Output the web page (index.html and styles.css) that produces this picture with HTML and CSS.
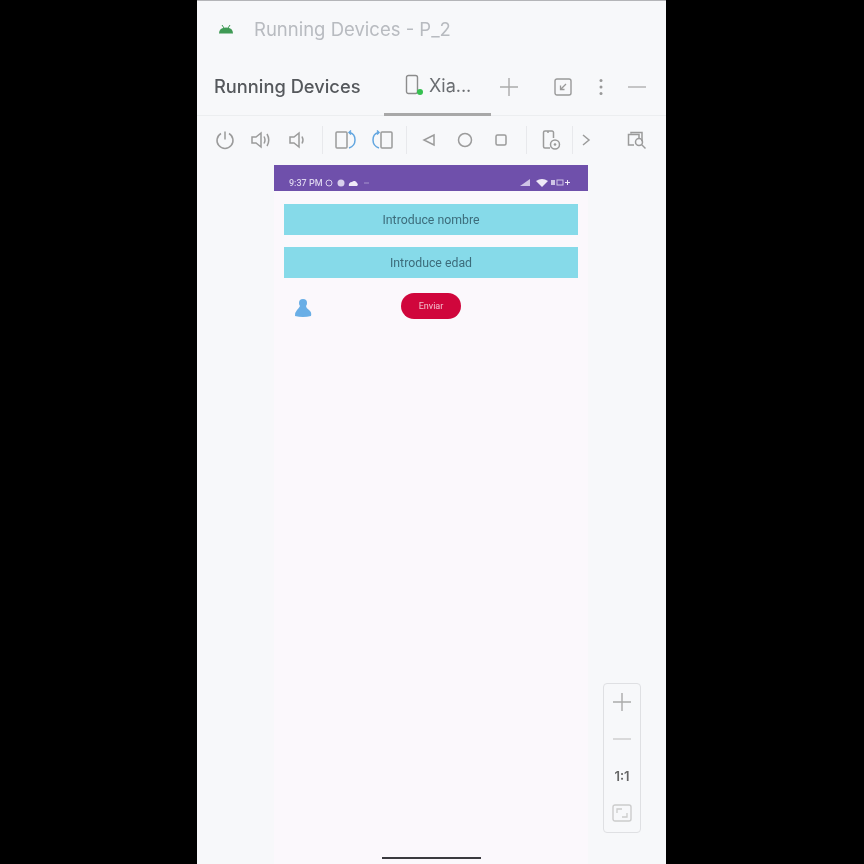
FILE: index.html
```html
<!DOCTYPE html>
<html lang="en">
  <head>
    <meta charset="UTF-8" />
    <meta name="viewport" content="width=device-width, initial-scale=1.0" />
    <title>Running Devices</title>
    <link rel="stylesheet" href="styles.css">
  </head>
  <body>
    <div class="window">
      <div class="title-bar">
        <svg class="android" width="16" height="10" viewBox="0 0 16 10">
          <path d="M1 9.500q0-6 7-6t7 6z" fill="#3f9a55" />
          <path d="M4 1l2 3M12 1l-2 3" stroke="#3f9a55" stroke-width="1" />
        </svg>
        <span class="title-text">Running Devices - P_2</span>
      </div>

      <div class="tool-bar">
        <span class="tool-name">Running Devices</span>
        <div class="tab">
          <svg class="tab-icon" width="20" height="22" viewBox="0 0 20 22">
            <rect x="1.500" y="1.500" width="11" height="18" rx="2" fill="none" stroke="#8c8c8c" stroke-width="1.400" />
            <circle cx="15" cy="18" r="3" fill="#35c04f" />
          </svg>
          <span class="tab-name">Xia...</span>
        </div>
        <div class="tool-actions">
          <svg class="cell-plus" width="20" height="20" viewBox="0 0 20 20">
            <path d="M10 1v18M1 10h18" stroke="#aaa" stroke-width="1.400" />
          </svg>
          <svg class="cell-collapse" width="18" height="18" viewBox="0 0 18 18">
            <rect x="1" y="1" width="16" height="16" rx="2" fill="none" stroke="#999" stroke-width="1.400" />
            <path d="M12 6l-5.500 5.500M6.500 7.500v4h4" fill="none" stroke="#999" stroke-width="1.300" />
          </svg>
          <svg class="cell-dots" width="4" height="18" viewBox="0 0 4 18">
            <circle cx="2" cy="2.500" r="1.500" fill="#999" />
            <circle cx="2" cy="9" r="1.500" fill="#999" />
            <circle cx="2" cy="15.500" r="1.500" fill="#999" />
          </svg>
          <svg class="cell-minus" width="18" height="4" viewBox="0 0 18 4">
            <path d="M0 2h18" stroke="#b5b5b5" stroke-width="1.500" />
          </svg>
        </div>
      </div>

      <div class="device-bar">
        <div class="cell">
          <svg width="20" height="20" viewBox="0 0 20 20"><path d="M6 3.500a8 8 0 1 0 8 0M10 1.500v8" class="line" /></svg>
        </div>
        <div class="cell">
          <svg width="22" height="20" viewBox="0 0 22 20"><path d="M2 7h4l5-4v14l-5-4H2zM14 6.500q2 3.500 0 7M17 4q3.500 6 0 12" class="line" /></svg>
        </div>
        <div class="cell">
          <svg width="18" height="20" viewBox="0 0 18 20"><path d="M2 7h4l5-4v14l-5-4H2zM14 6.500q2 3.500 0 7" class="line" /></svg>
        </div>
        <div class="sep sep-first"></div>
        <div class="cell">
          <svg width="22" height="20" viewBox="0 0 22 20"><rect x="1" y="2" width="11" height="16" rx="1" class="line" /><path d="M15 2.500q5 1.500 5 7.500t-6 8" class="line blue" /><path d="M16 0.500l-2 2 2 2" class="line blue" /></svg>
        </div>
        <div class="cell">
          <svg width="22" height="20" viewBox="0 0 22 20"><rect x="10" y="2" width="11" height="16" rx="1" class="line" /><path d="M7 2.500q-5 1.500-5 7.500t6 8" class="line blue" /><path d="M6 0.500l2 2-2 2" class="line blue" /></svg>
        </div>
        <div class="sep sep-nav"></div>
        <div class="cell">
          <svg width="14" height="14" viewBox="0 0 14 14"><path d="M12 2v10L2 7z" class="line" /></svg>
        </div>
        <div class="cell">
          <svg width="16" height="16" viewBox="0 0 16 16"><circle cx="8" cy="8" r="6.500" class="line" /></svg>
        </div>
        <div class="cell">
          <svg width="14" height="14" viewBox="0 0 14 14"><rect x="2" y="2" width="10" height="10" rx="1.500" class="line" /></svg>
        </div>
        <div class="sep sep-device"></div>
        <div class="cell">
          <svg width="20" height="22" viewBox="0 0 20 22"><path d="M9 19H4a1.500 1.500 0 0 1-1.500-1.500v-14A1.500 1.500 0 0 1 4 2h7a1.500 1.500 0 0 1 1.500 1.500V9M7 2v2" class="line" /><circle cx="14" cy="15.500" r="4.500" class="line" /><circle cx="14" cy="15.500" r="1.300" fill="#999" /></svg>
        </div>
        <div class="sep sep-tight"></div>
        <div class="cell cell-small">
          <svg width="10" height="14" viewBox="0 0 10 14"><path d="M2 2l6 5-6 5" class="line" /></svg>
        </div>
        <div class="cell cell-last">
          <svg width="22" height="20" viewBox="0 0 22 20"><path d="M6 3.500V2.500h11v8h-1M9 15H3.500V4.500H14V8" class="line" /><circle cx="14" cy="12" r="3.500" class="line" /><path d="M16.500 14.500l4 4" class="line" /></svg>
        </div>
      </div>

      <div class="phone">
        <div class="status-bar">
          <span class="clock">9:37 PM</span>
          <svg class="status-left" width="48" height="8" viewBox="0 0 48 8">
            <circle cx="6" cy="4" r="3" fill="none" stroke="#d8cfec" />
            <circle cx="18" cy="4" r="3.500" fill="#d8cfec" />
            <path d="M26 7a3 3 0 0 1 3-4 3 3 0 0 1 5 1 2 2 0 0 1 0 3z" fill="#efeaf7" />
            <path d="M41 4h5" stroke="#a794cd" />
          </svg>
          <svg class="status-right" width="52" height="9" viewBox="0 0 52 9">
            <path d="M2 8l10-7v7z" fill="#cfc4e6" />
            <path d="M18 3q6-4 12 0l-6 6z" fill="#efeaf7" />
            <rect x="33" y="2" width="4" height="5" fill="#cfc4e6" />
            <rect x="39" y="2" width="6" height="5" fill="none" stroke="#cfc4e6" />
            <path d="M47 4.500h5M49.500 2v5" stroke="#efeaf7" />
          </svg>
        </div>

        <div class="form">
          <div class="field">Introduce nombre</div>
          <div class="field field-age">Introduce edad</div>
          <div class="form-row">
            <svg class="person" width="18" height="20" viewBox="0 0 18 20">
              <circle cx="9" cy="5" r="4" fill="#69aee6" />
              <path d="M6 8h6q0 2 3 4t2 6q-8 2-16 0 0-4 2-6t3-4z" fill="#69aee6" />
            </svg>
            <div class="send">Enviar</div>
          </div>
        </div>

        <div class="home-bar"></div>
      </div>

      <div class="zoom-panel">
        <svg width="20" height="20" viewBox="0 0 20 20"><path d="M10 1v18M1 10h18" stroke="#aaa" stroke-width="1.400" /></svg>
        <svg class="zoom-minus" width="18" height="2" viewBox="0 0 18 2"><path d="M0 1h18" stroke="#ccc" stroke-width="1.400" /></svg>
        <span class="zoom-label">1:1</span>
        <svg class="zoom-fit" width="20" height="18" viewBox="0 0 20 18">
          <rect x="1" y="1" width="18" height="16" rx="2" fill="none" stroke="#ccc" stroke-width="1.400" />
          <path d="M5 9V5h5M15 9v4h-5" fill="none" stroke="#ccc" stroke-width="1.300" />
        </svg>
      </div>
    </div>
  </body>
</html>
```

FILE: styles.css
```css
body {
  margin: 0;
  background-color: #000;
  font-family: "Inter", "Liberation Sans", sans-serif;
}

.window {
  position: relative;
  width: 469px;
  height: 864px;
  margin-left: 197px;
  box-sizing: border-box;
  display: flex;
  flex-direction: column;
  overflow: hidden;
  background-color: #f7f8fa;
  border-top: 1px solid #b4b5b8;
  filter: blur(0.4px);
}

.title-bar {
  height: 57px;
  box-sizing: border-box;
  padding: 0 0 2px 21px;
  display: flex;
  align-items: center;
}

.android {
  margin-right: 20px;
}

.title-text {
  font-size: 18.5px;
  color: #b8bbc0;
}

.tool-bar {
  height: 58px;
  display: flex;
  align-items: center;
  border-bottom: 1px solid #eceef0;
  box-sizing: border-box;
  padding-left: 17px;
}

.tool-name {
  width: 170px;
  margin-bottom: 2px;
  font-size: 18.3px;
  font-weight: 500;
  color: #55585c;
  white-space: nowrap;
}

.tab {
  width: 107px;
  height: 58px;
  box-sizing: border-box;
  display: flex;
  align-items: center;
  padding-left: 21px;
  border-bottom: 3px solid #a8a8a8;
}

.tab-icon {
  margin-right: 4px;
}

.tab-name {
  font-size: 18px;
  color: #6a6d71;
}

.tool-actions {
  display: flex;
  align-items: center;
}

.cell-plus {
  margin-left: 8px;
}

.cell-collapse {
  margin-left: 35px;
}

.cell-dots {
  margin-left: 27px;
}

.cell-minus {
  margin-left: 25px;
}

.device-bar {
  height: 49px;
  box-sizing: border-box;
  padding: 0 0 2px 10px;
  display: flex;
  align-items: center;
}

.cell {
  width: 36px;
  display: flex;
  justify-content: center;
  align-items: center;
}

.cell-small {
  width: 26px;
}

.cell-last {
  margin-left: 19px;
}

.line {
  fill: none;
  stroke: #9b9b9b;
  stroke-width: 1.5;
}

.blue {
  stroke: #62a6e0;
}

.sep {
  width: 1px;
  height: 28px;
  background-color: #e8e9ec;
}

.sep-first {
  margin: 0 5px 0 7px;
}

.sep-nav {
  margin: 0 4px 0 6px;
}

.sep-device {
  margin: 0 6px 0 7px;
}

.sep-tight {
  margin: 0 0 0 3px;
}

.phone {
  flex: 1;
  width: 314px;
  margin-left: 77px;
  display: flex;
  flex-direction: column;
  background-color: #fbf8fc;
}

.status-bar {
  height: 26px;
  flex-shrink: 0;
  box-sizing: border-box;
  display: flex;
  align-items: center;
  padding: 9px 18px 0 15px;
  background-color: #6f50ab;
  color: #dcd4ee;
  font-family: "Roboto", sans-serif;
  font-size: 9px;
  font-weight: 500;
}

.status-right {
  margin-left: auto;
}

.form {
  display: flex;
  flex-direction: column;
  gap: 12px;
  padding: 13px 10px 0;
}

.field {
  height: 31px;
  display: flex;
  align-items: center;
  justify-content: center;
  background-color: #86dae9;
  color: #3c6c7b;
  font-family: "Roboto", sans-serif;
  font-size: 12.3px;
}

.field-age {
  padding-top: 1px;
  box-sizing: border-box;
}

.form-row {
  display: grid;
  grid-template-columns: 1fr 60px 1fr;
  align-items: center;
  margin-top: 3px;
}

.person {
  margin: 4px 0 0 10px;
}

.send {
  height: 26px;
  display: flex;
  align-items: center;
  justify-content: center;
  border-radius: 13px;
  background-color: #d0063c;
  color: #f3c0cd;
  font-family: "Roboto", sans-serif;
  font-size: 9px;
}

.home-bar {
  width: 99px;
  height: 2px;
  flex-shrink: 0;
  margin: auto auto 5px;
  background-color: #3a3a3e;
}

.zoom-panel {
  position: absolute;
  left: 406px;
  top: 682px;
  width: 38px;
  height: 150px;
  box-sizing: border-box;
  display: flex;
  flex-direction: column;
  align-items: center;
  padding-top: 8px;
  border: 1.5px solid #dfe0e3;
  border-radius: 4px;
}

.zoom-minus {
  margin-top: 26px;
}

.zoom-label {
  margin-top: 28px;
  font-size: 13px;
  font-weight: 600;
  color: #666;
}

.zoom-fit {
  margin-top: 20px;
}
```
